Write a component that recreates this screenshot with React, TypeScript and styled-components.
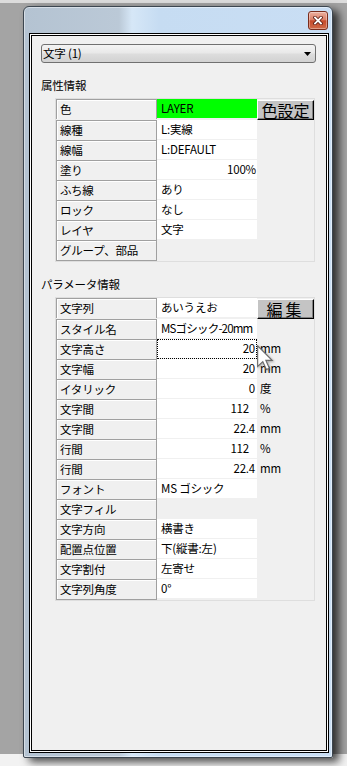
import React from 'react';
import styled, { createGlobalStyle } from 'styled-components';

const GlobalStyle = createGlobalStyle`
  html, body {
    margin: 0;
    padding: 0;
  }
  body {
    font-family: 'Noto Sans CJK JP', 'Noto Sans', sans-serif;
    font-size: 11.5px;
    letter-spacing: -0.2px;
    color: #000;
  }
`;

const Desktop = styled.div`
  width: 347px;
  height: 766px;
  overflow: hidden;
  box-sizing: border-box;
  padding: 6px 0 0 23px;
  background: linear-gradient(#dcdcdc 0 3px, #a4a4a4 3px 754px, #f2f2f2 754px);
`;

const Window = styled.div`
  width: 310px;
  height: 752px;
  box-sizing: border-box;
  display: flex;
  flex-direction: column;
  border: 1px solid #3c4650;
  border-radius: 6px 6px 2px 2px;
  background: linear-gradient(
    90deg,
    #b4c3d2 0,
    #bbc9d7 95px,
    #d6e7f7 108px,
    #c6dcf2 135px,
    #c9def4 100%
  );
  box-shadow: 6px 4px 9px rgba(0, 0, 0, 0.7),
    inset 0 0 0 1px rgba(255, 255, 255, 0.45);
`;

const TitleBar = styled.div`
  height: 26px;
  flex: none;
  display: flex;
  justify-content: flex-end;
  align-items: flex-start;
  padding: 4px 4px 0 0;
  box-sizing: border-box;
`;

const CloseButton = styled.div`
  width: 20px;
  height: 19px;
  box-sizing: border-box;
  display: flex;
  align-items: center;
  justify-content: center;
  border: 1px solid #7a2c1c;
  border-radius: 3px;
  background: linear-gradient(#ebb0a0, #dc8068 45%, #c64a2c 52%, #cf6a48 100%);
  box-shadow: inset 0 0 0 1px rgba(255, 255, 255, 0.35);
`;

const Client = styled.div`
  height: 720px;
  flex: none;
  margin: 0 3px 0 5px;
  box-sizing: border-box;
  border: 1px solid #000;
  box-shadow: inset 0 0 0 1px #fff, inset 0 0 0 2px #000;
  background: #f0f0f0;
  padding: 10px 12px 0 11px;
`;

const Combo = styled.div`
  height: 19px;
  box-sizing: border-box;
  display: flex;
  align-items: center;
  justify-content: space-between;
  padding: 0 4px 0 1px;
  border: 1px solid #707070;
  border-radius: 3px;
  background: linear-gradient(#f4f4f4, #e8e8e8 48%, #dddddd 52%, #d2d2d2);
  line-height: 17px;
`;

const SectionLabel = styled.div<{ $top: number }>`
  margin-top: ${(p) => p.$top}px;
  height: 16px;
  line-height: 16px;
`;

const Table = styled.div`
  position: relative;
  margin: 5px 0 0 14px;
  width: 260px;
  box-sizing: border-box;
  border: 1px solid #dedede;
  background: #f0f0f0;
  display: grid;
  grid-template-columns: 101px 100px 57px;
`;

const NameCell = styled.div<{ $last?: boolean }>`
  height: ${(p) => (p.$last ? 21 : 20)}px;
  box-sizing: border-box;
  padding-left: 3px;
  line-height: 19px;
  white-space: nowrap;
  border: 1px solid #a0a0a0;
  border-bottom: ${(p) => (p.$last ? '1px solid #a0a0a0' : 'none')};
  box-shadow: inset 1px 1px 0 #fff;
  background: #f0f0f0;
`;

const ValueCell = styled.div<{
  $bg: string;
  $right?: boolean;
  $pr: number;
  $ls: number;
  $focus?: boolean;
}>`
  height: 20px;
  box-sizing: border-box;
  padding: 0 ${(p) => p.$pr}px 0 4px;
  line-height: 19px;
  white-space: nowrap;
  letter-spacing: ${(p) => p.$ls}px;
  text-align: ${(p) => (p.$right ? 'right' : 'left')};
  background: ${(p) => p.$bg};
  border-bottom: 1px solid #f0f0f0;
  outline: ${(p) => (p.$focus ? '1px dotted #000' : 'none')};
  outline-offset: -1px;
`;

const UnitCell = styled.div`
  height: 20px;
  padding-left: 3px;
  line-height: 19px;
`;

const SideButton = styled.div<{ $spacing: number }>`
  height: 20px;
  box-sizing: border-box;
  margin-top: 1px;
  display: flex;
  align-items: center;
  justify-content: center;
  font-size: 16px;
  line-height: 17px;
  letter-spacing: ${(p) => p.$spacing}px;
  background: #c4c4c4;
  border: 1px solid;
  border-color: #fff #000 #000 #fff;
  box-shadow: inset -1px -1px 0 #808080;
`;

const Cursor = styled.svg`
  position: absolute;
  left: 201px;
  top: 47px;
  filter: drop-shadow(1px 1px 1px rgba(0, 0, 0, 0.3));
`;

type Row = {
  name: string;
  value?: string;
  right?: boolean;
  pr?: number;
  ls?: number;
  bg?: string;
  unit?: string;
  button?: string;
  spacing?: number;
  focus?: boolean;
};

const attrRows: Row[] = [
  { name: '色', value: 'LAYER', bg: '#00ff00', button: '色設定', spacing: 0 },
  { name: '線種', value: 'L:実線' },
  { name: '線幅', value: 'L:DEFAULT' },
  { name: '塗り', value: '100%', right: true, pr: 1 },
  { name: 'ふち線', value: 'あり' },
  { name: 'ロック', value: 'なし' },
  { name: 'レイヤ', value: '文字' },
  { name: 'グループ、部品' },
];

const paramRows: Row[] = [
  { name: '文字列', value: 'あいうえお', button: '編集', spacing: 3 },
  { name: 'スタイル名', value: 'MSゴシック-20mm', ls: -0.8 },
  { name: '文字高さ', value: '20', right: true, unit: 'mm', focus: true },
  { name: '文字幅', value: '20', right: true, unit: 'mm' },
  { name: 'イタリック', value: '0', right: true, unit: '度' },
  { name: '文字間', value: '112', right: true, pr: 8, unit: '%' },
  { name: '文字間', value: '22.4', right: true, unit: 'mm' },
  { name: '行間', value: '112', right: true, pr: 8, unit: '%' },
  { name: '行間', value: '22.4', right: true, unit: 'mm' },
  { name: 'フォント', value: 'MS ゴシック' },
  { name: '文字フィル' },
  { name: '文字方向', value: '横書き' },
  { name: '配置点位置', value: '下(縦書:左)' },
  { name: '文字割付', value: '左寄せ' },
  { name: '文字列角度', value: '0°' },
];

const PropertyTable = ({ rows, cursor }: { rows: Row[]; cursor?: boolean }) => (
  <Table>
    {rows.map((r, i) => (
      <React.Fragment key={i}>
        <NameCell $last={i === rows.length - 1}>{r.name}</NameCell>
        <ValueCell
          $bg={r.bg ?? (r.value ? '#fff' : '#f0f0f0')}
          $right={r.right}
          $pr={r.pr ?? 2}
          $ls={r.ls ?? -0.2}
          $focus={r.focus}
        >
          {r.value}
        </ValueCell>
        {r.button ? (
          <SideButton $spacing={r.spacing ?? 0}>{r.button}</SideButton>
        ) : (
          <UnitCell>{r.unit}</UnitCell>
        )}
      </React.Fragment>
    ))}
    {cursor && (
      <Cursor width="18" height="26" viewBox="0 0 14 20">
        <path
          d="M0.5 0.5 L0.5 16.5 L4.5 12.8 L7.3 19 L9.6 18 L6.9 11.9 L11.8 11.9 Z"
          fill="#fff"
          stroke="#6a6a6a"
          strokeWidth="0.9"
        />
      </Cursor>
    )}
  </Table>
);

export default function App() {
  return (
    <>
      <GlobalStyle />
      <Desktop>
        <Window>
          <TitleBar>
            <CloseButton>
              <svg width="10" height="9" viewBox="0 0 10 9">
                <path
                  d="M2 1.5 L8 7.5 M8 1.5 L2 7.5"
                  stroke="#5a1a10"
                  strokeWidth="3.4"
                  strokeLinecap="square"
                />
                <path
                  d="M2 1.5 L8 7.5 M8 1.5 L2 7.5"
                  stroke="#fff"
                  strokeWidth="1.8"
                  strokeLinecap="square"
                />
              </svg>
            </CloseButton>
          </TitleBar>
          <Client>
            <Combo>
              <span>文字 (1)</span>
              <svg width="7" height="4" viewBox="0 0 7 4">
                <path d="M0 0 H7 L3.5 4 Z" fill="#000" />
              </svg>
            </Combo>
            <SectionLabel $top={14}>属性情報</SectionLabel>
            <PropertyTable rows={attrRows} />
            <SectionLabel $top={14}>パラメータ情報</SectionLabel>
            <PropertyTable rows={paramRows} cursor />
          </Client>
        </Window>
      </Desktop>
    </>
  );
}
